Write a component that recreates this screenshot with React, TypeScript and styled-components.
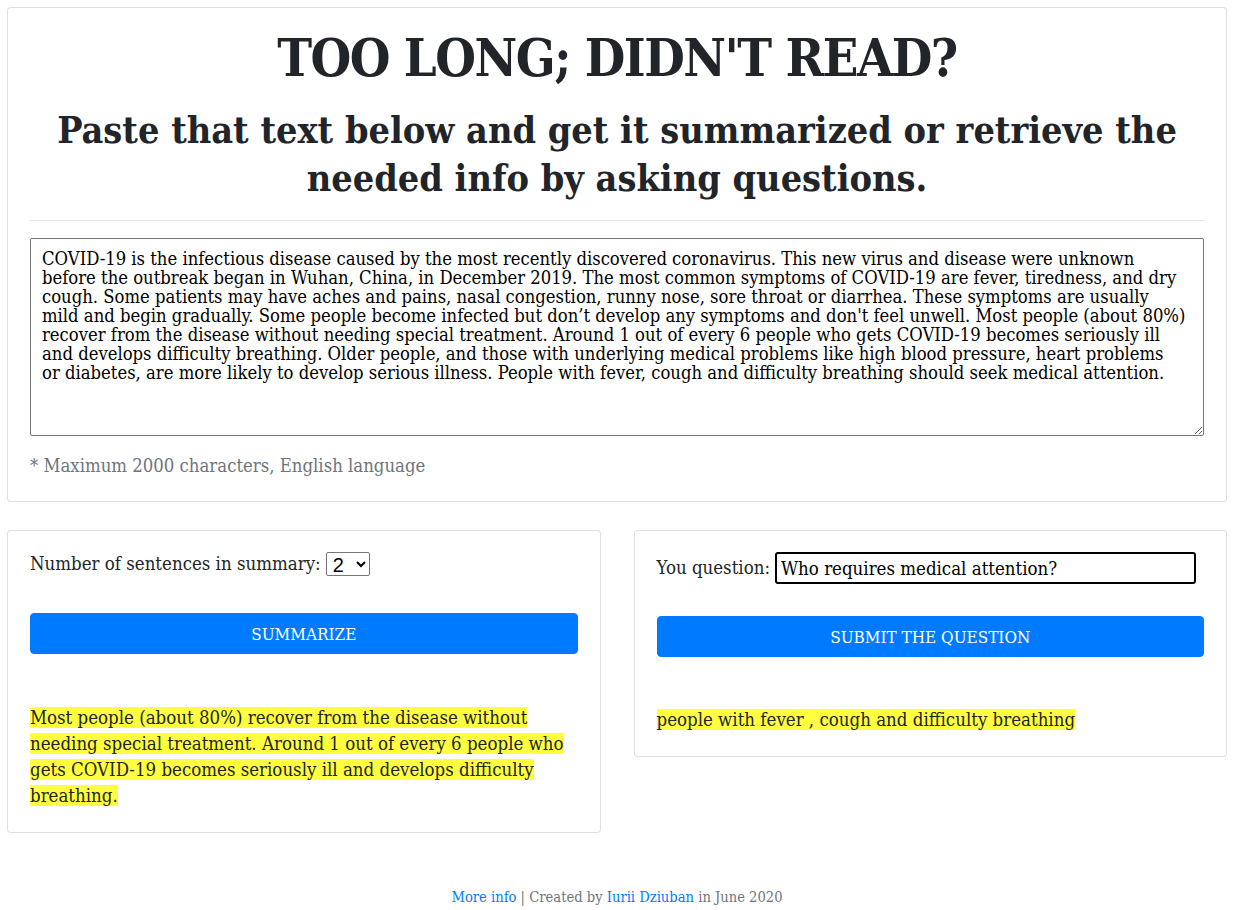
import React from "react";
import styled, { createGlobalStyle } from "styled-components";

const GlobalStyle = createGlobalStyle`
  html, body { margin: 0; padding: 0; background: #fff; }
  body {
    font-family: "DejaVu Serif Condensed", "DejaVu Serif", serif;
    color: #212529;
  }
  * { box-sizing: border-box; }
`;

const Page = styled.div`
  padding: 7px 6px 0 7px;
  display: flex;
  flex-direction: column;
  gap: 28px;
`;

const Card = styled.div`
  background: #fff;
  border: 1px solid rgba(0, 0, 0, 0.125);
  border-radius: 4px;
  padding: 21px 22px 23px;
  display: flex;
  flex-direction: column;
`;

const TopCard = styled(Card)`
  padding-top: 20px;
  padding-bottom: 23px;
`;

const Title = styled.h1`
  margin: 0;
  text-align: center;
  font-size: 52px;
  letter-spacing: -1.5px;
  line-height: 60px;
  font-weight: 700;
  color: #212529;
`;

const Subtitle = styled.h2`
  margin: 18px 0 0;
  text-align: center;
  font-size: 37.5px;
  line-height: 48px;
  font-weight: 700;
  color: #212529;
`;

const Rule = styled.hr`
  border: 0;
  border-top: 1px solid rgba(0, 0, 0, 0.1);
  margin: 18px 0 17px;
`;

const TextArea = styled.textarea`
  width: 100%;
  height: 198px;
  border: 1px solid #767676;
  border-radius: 2px;
  padding: 10px 14px 9px 11px;
  font-family: inherit;
  font-size: 18.3px;
  line-height: 19px;
  color: #000;
  resize: vertical;
  display: block;
`;

const Hint = styled.div`
  margin-top: 18px;
  font-size: 18.4px;
  line-height: 24px;
  color: #6c757d;
`;

const Row = styled.div`
  display: grid;
  grid-template-columns: 1fr 1fr;
  gap: 33px;
  align-items: start;
`;

const FieldRow = styled.div`
  display: flex;
  align-items: center;
  gap: 5px;
  font-size: 18.5px;
  line-height: 24px;
`;

const Select = styled.select`
  font-family: "Liberation Sans", Arial, sans-serif;
  font-size: 20px;
  height: 24px;
  width: 44px;
  border: 1px solid #767676;
  border-radius: 2px;
  background: #fff;
  color: #000;
  padding: 0 2px;
`;

const Input = styled.input`
  flex: 1;
  margin-right: 8px;
  height: 32px;
  border: 2px solid #000;
  border-radius: 3px;
  padding: 0 4px;
  font-family: inherit;
  font-size: 18.5px;
  color: #000;
  outline: none;
`;

const Button = styled.button<{ $top: number }>`
  margin-top: ${(p) => p.$top}px;
  height: 41px;
  width: 100%;
  background: #007bff;
  border: 1px solid #007bff;
  border-radius: 4px;
  color: #fff;
  font-family: inherit;
  font-size: 17px;
  text-transform: uppercase;
  cursor: pointer;
`;

const Result = styled.p<{ $top: number }>`
  margin: ${(p) => p.$top}px 0 0;
  font-size: 18.5px;
  line-height: 26px;
`;

const Mark = styled.span`
  background: #ffff40;
  color: #212529;
`;

const Footer = styled.footer`
  margin-top: 26px;
  text-align: center;
  font-size: 14.6px;
  line-height: 20px;
  color: #6c757d;
  padding-bottom: 8px;
`;

const Link = styled.a`
  color: #007bff;
  text-decoration: none;
`;

const TEXT =
  "COVID-19 is the infectious disease caused by the most recently discovered coronavirus. This new virus and disease were unknown before the outbreak began in Wuhan, China, in December 2019. The most common symptoms of COVID-19 are fever, tiredness, and dry cough. Some patients may have aches and pains, nasal congestion, runny nose, sore throat or diarrhea. These symptoms are usually mild and begin gradually. Some people become infected but don\u2019t develop any symptoms and don't feel unwell. Most people (about 80%) recover from the disease without needing special treatment. Around 1 out of every 6 people who gets COVID-19 becomes seriously ill and develops difficulty breathing. Older people, and those with underlying medical problems like high blood pressure, heart problems or\u00a0diabetes, are more likely to develop serious illness. People with fever, cough and difficulty breathing should seek medical attention.";

export default function App() {
  return (
    <>
      <GlobalStyle />
      <Page>
        <TopCard>
          <Title>TOO LONG; DIDN'T READ?</Title>
          <Subtitle>
            Paste that text below and get it summarized or retrieve the needed info by asking questions.
          </Subtitle>
          <Rule />
          <TextArea defaultValue={TEXT} />
          <Hint>* Maximum 2000 characters, English language</Hint>
        </TopCard>
        <Row>
          <Card>
            <FieldRow>
              Number of sentences in summary:
              <Select defaultValue="2">
                <option>1</option>
                <option>2</option>
                <option>3</option>
                <option>4</option>
                <option>5</option>
              </Select>
            </FieldRow>
            <Button $top={37}>Summarize</Button>
            <Result $top={51}>
              <Mark>
                Most people (about 80%) recover from the disease without needing special treatment. Around 1 out of every 6 people who gets COVID-19 becomes seriously ill and develops difficulty breathing.
              </Mark>
            </Result>
          </Card>
          <Card>
            <FieldRow>
              You question:
              <Input defaultValue="Who requires medical attention?" />
            </FieldRow>
            <Button $top={32}>Submit the question</Button>
            <Result $top={50}>
              <Mark>people with fever , cough and difficulty breathing</Mark>
            </Result>
          </Card>
        </Row>
        <Footer>
          <Link href="#">More info</Link> | Created by <Link href="#">Iurii Dziuban</Link> in June 2020
        </Footer>
      </Page>
    </>
  );
}
